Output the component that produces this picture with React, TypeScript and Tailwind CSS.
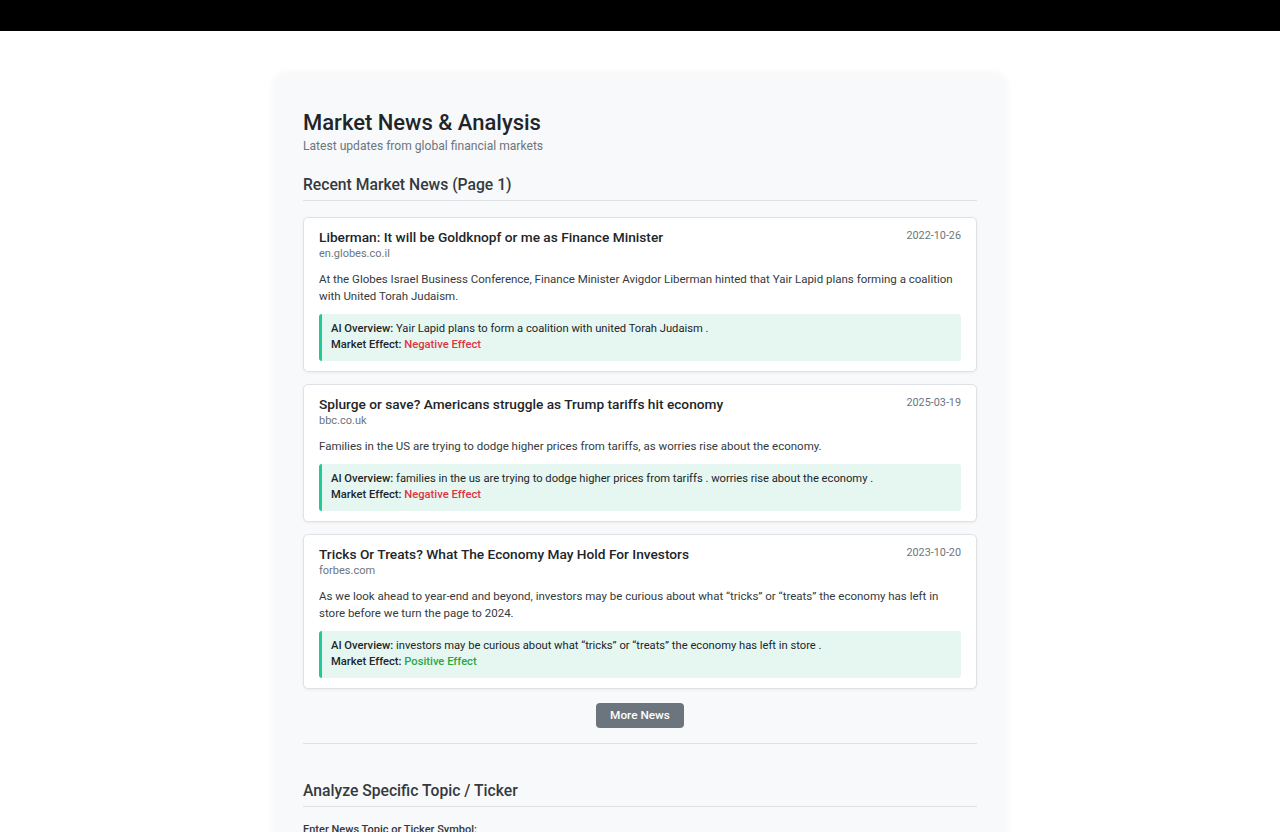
const news = [
  {
    title: 'Liberman: It will be Goldknopf or me as Finance Minister',
    source: 'en.globes.co.il',
    date: '2022-10-26',
    desc: 'At the Globes Israel Business Conference, Finance Minister Avigdor Liberman hinted that Yair Lapid plans forming a coalition with United Torah Judaism.',
    overview: 'Yair Lapid plans to form a coalition with united Torah Judaism .',
    positive: false,
  },
  {
    title: 'Splurge or save? Americans struggle as Trump tariffs hit economy',
    source: 'bbc.co.uk',
    date: '2025-03-19',
    desc: 'Families in the US are trying to dodge higher prices from tariffs, as worries rise about the economy.',
    overview: 'families in the us are trying to dodge higher prices from tariffs . worries rise about the economy .',
    positive: false,
  },
  {
    title: 'Tricks Or Treats? What The Economy May Hold For Investors',
    source: 'forbes.com',
    date: '2023-10-20',
    desc: 'As we look ahead to year-end and beyond, investors may be curious about what \u201ctricks\u201d or \u201ctreats\u201d the economy has left in store before we turn the page to 2024.',
    overview: 'investors may be curious about what \u201ctricks\u201d or \u201ctreats\u201d the economy has left in store .',
    positive: true,
  },
];

type Item = (typeof news)[number];

function NewsCard({ item }: { item: Item }) {
  return (
    <div className="bg-white border border-[#dee2e6] rounded-[5px] px-[15px] pt-[10px] pb-[10px] shadow-[0_1px_3px_rgba(0,0,0,0.06)]">
      <div className="flex justify-between items-start">
        <div>
          <h3 className="text-[13.7px] leading-[19px] font-medium text-[#212529]">{item.title}</h3>
          <div className="text-[11px] leading-[14px] text-[#6c757d]">{item.source}</div>
        </div>
        <div className="text-[10.8px] leading-[14px] text-[#6c757d] pt-[1px]">{item.date}</div>
      </div>
      <p className="mt-[10px] text-[11.5px] leading-[17px] text-[#343a40]">{item.desc}</p>
      <div className="mt-[9px] bg-[#e6f7f2] border-l-[3px] border-[#20c997] rounded-[3px] pl-[9px] pr-3 pt-[7px] pb-[8px] text-[11.2px] leading-[16px] text-[#212529]">
        <div>
          <span className="font-medium">AI Overview:</span> {item.overview}
        </div>
        <div>
          <span className="font-medium">Market Effect:</span>{' '}
          <span className={`font-medium ${item.positive ? 'text-[#28a745]' : 'text-[#dc3545]'}`}>
            {item.positive ? 'Positive Effect' : 'Negative Effect'}
          </span>
        </div>
      </div>
    </div>
  );
}

export default function App() {
  return (
    <div className="min-h-[832px] bg-white font-['Roboto','Liberation_Sans',sans-serif] text-[#212529]">
      <div className="h-[31px] bg-black" />
      <div className="pt-[43px] flex justify-center">
        <div className="w-[730px] bg-[#f8f9fa] rounded-[10px] shadow-[0_0_10px_rgba(0,0,0,0.06)] px-[28px] pt-[34px] pb-10">
          <h1 className="text-[22px] leading-[30px] font-medium text-[#212529]">Market News &amp; Analysis</h1>
          <p className="text-[12.1px] leading-[16px] text-[#6c757d]">Latest updates from global financial markets</p>

          <h2 className="mt-[20px] text-[15.7px] leading-[22px] font-medium text-[#343a40] pb-[4px] border-b border-[#dee2e6]">
            Recent Market News (Page 1)
          </h2>

          <div className="mt-[16px] flex flex-col gap-[12px]">
            {news.map((n) => (
              <NewsCard key={n.title} item={n} />
            ))}
          </div>

          <div className="mt-[14px] flex justify-center">
            <button className="bg-[#6c757d] text-white text-[11.8px] font-medium rounded-[4px] px-[14px] h-[25px]">
              More News
            </button>
          </div>

          <div className="mt-[15px] border-t border-[#dee2e6]" />

          <h2 className="mt-[36px] text-[15.7px] leading-[22px] font-medium text-[#343a40] pb-[4px] border-b border-[#dee2e6]">
            Analyze Specific Topic / Ticker
          </h2>
          <label className="block mt-[15px] text-[11px] font-medium text-[#343a40]">
            Enter News Topic or Ticker Symbol:
          </label>
          <input className="mt-2 w-full h-[34px] border border-[#ced4da] rounded bg-white" />
        </div>
      </div>
    </div>
  );
}
